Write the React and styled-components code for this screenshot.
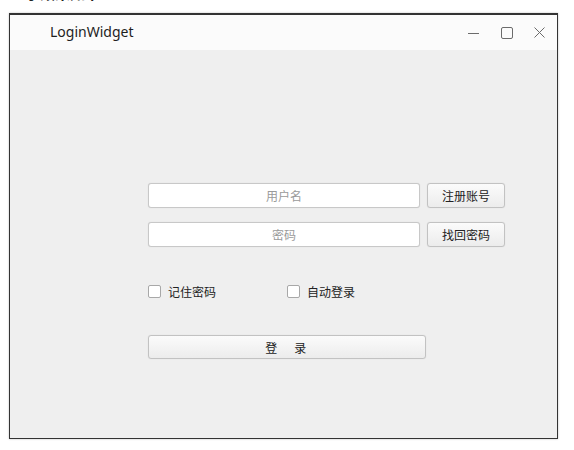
import React from 'react';
import styled, { createGlobalStyle } from 'styled-components';

const GlobalStyle = createGlobalStyle`
  html, body {
    margin: 0;
    padding: 0;
    background: #ffffff;
  }
  body {
    font-family: "Noto Sans CJK SC", "Noto Sans", sans-serif;
  }
`;

const Page = styled.div`
  width: 574px;
  height: 450px;
  overflow: hidden;
  display: flex;
  flex-direction: column;
`;

const Caption = styled.div`
  margin: -15px 0 0 10px;
  height: 16px;
  font-size: 15px;
  line-height: 16px;
  font-weight: 700;
  color: #222;
`;

const Window = styled.div`
  margin: 12px 0 0 9px;
  width: 547px;
  height: 423px;
  border: 1px solid #333;
  border-top-width: 2px;
  box-shadow: 0 0 2px rgba(0, 0, 0, 0.25);
  display: flex;
  flex-direction: column;
  background: #efefef;
`;

const TitleBar = styled.div`
  height: 35px;
  flex-shrink: 0;
  background: #fbfbfb;
  display: flex;
  align-items: center;
  padding-left: 40px;
`;

const Title = styled.span`
  flex: 1;
  font-family: "Noto Sans", sans-serif;
  font-size: 14px;
  color: #1e1e1e;
  padding-bottom: 2px;
`;

const Controls = styled.div`
  display: flex;
  align-items: center;
  height: 100%;
  padding-right: 1px;
`;

const ControlButton = styled.div`
  width: 33px;
  height: 100%;
  display: flex;
  align-items: center;
  justify-content: center;
  color: #6b6b6b;
`;

const Body = styled.div`
  flex: 1;
  padding: 133px 0 0 138px;
  display: flex;
  flex-direction: column;
`;

const Row = styled.div`
  display: flex;
  gap: 7px;
  margin-bottom: ${({ $gap }) => $gap}px;
`;

const Input = styled.input`
  box-sizing: border-box;
  width: 272px;
  height: 25px;
  border: 1px solid #c8c8c8;
  border-radius: 3px;
  background: #fff;
  box-shadow: 0 0 1px rgba(0, 0, 0, 0.15);
  text-align: center;
  font-family: "Noto Sans CJK SC", sans-serif;
  font-size: 12px;
  outline: none;
  padding: 0;
  &::placeholder {
    color: #9a9a9a;
  }
`;

const Button = styled.button`
  box-sizing: border-box;
  width: ${({ $width }) => $width}px;
  height: ${({ $height }) => $height}px;
  border: 1px solid #c2c2c2;
  border-radius: 3px;
  background: linear-gradient(#fbfbfb, #ececec);
  box-shadow: 0 0 1px rgba(0, 0, 0, 0.15);
  font-family: "Noto Sans CJK SC", sans-serif;
  font-size: 12px;
  color: #222;
  padding: 0;
  letter-spacing: ${({ $spacing }) => $spacing || 0}px;
`;

const CheckRow = styled.div`
  display: flex;
  margin: 36px 0 35px;
`;

const CheckLabel = styled.label`
  width: ${({ $width }) => $width}px;
  display: flex;
  align-items: center;
  gap: 7px;
  font-size: 12px;
  color: #222;
`;

const Box = styled.span`
  box-sizing: border-box;
  width: 13px;
  height: 13px;
  border: 1px solid #a8a8a8;
  border-radius: 2px;
  background: #fff;
`;

export default function App() {
  return (
    <Page>
      <GlobalStyle />
      <Caption>显示效果如下：</Caption>
      <Window>
        <TitleBar>
          <Title>LoginWidget</Title>
          <Controls>
            <ControlButton>
              <svg width="11" height="11" viewBox="0 0 11 11">
                <path d="M0 6.5h11" stroke="currentColor" strokeWidth="1" />
              </svg>
            </ControlButton>
            <ControlButton>
              <svg width="12" height="12" viewBox="0 0 12 12">
                <rect x="0.5" y="0.5" width="11" height="11" rx="1.5" fill="none" stroke="currentColor" />
              </svg>
            </ControlButton>
            <ControlButton>
              <svg width="11" height="11" viewBox="0 0 11 11">
                <path d="M0.5 0.5l10 10M10.5 0.5l-10 10" stroke="currentColor" strokeWidth="1" />
              </svg>
            </ControlButton>
          </Controls>
        </TitleBar>
        <Body>
          <Row $gap={14}>
            <Input placeholder="用户名" />
            <Button $width={78} $height={25}>注册账号</Button>
          </Row>
          <Row $gap={0}>
            <Input type="password" placeholder="密码" />
            <Button $width={78} $height={25}>找回密码</Button>
          </Row>
          <CheckRow>
            <CheckLabel $width={139}>
              <Box />
              记住密码
            </CheckLabel>
            <CheckLabel $width={100}>
              <Box />
              自动登录
            </CheckLabel>
          </CheckRow>
          <Button $width={278} $height={24} $spacing={2.5}>登　录</Button>
        </Body>
      </Window>
    </Page>
  );
}
